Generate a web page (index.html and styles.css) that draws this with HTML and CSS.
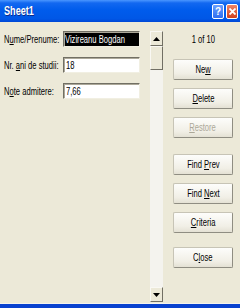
FILE: index.html
```html
<!DOCTYPE html>
<html lang="ro">
<head>
  <meta charset="UTF-8">
  <title>Sheet1</title>
  <link rel="stylesheet" href="styles.css">
</head>
<body>

  <div class="window">
    <div class="titlebar">
      <span class="title"><span class="nar">Sheet1</span></span>
      <span class="tb-btn help">?</span>
      <span class="tb-btn close">
        <svg width="7" height="7" viewBox="0 0 7 7"><path d="M0.5 0.5 L6.5 6.5 M6.5 0.5 L0.5 6.5" stroke="#fff" stroke-width="1.8"/></svg>
      </span>
    </div>

    <div class="client">
      <div class="fields">
        <div class="row">
          <label><span class="nar">N<u>u</u>me/Prenume:</span></label>
          <div class="field"><span class="nar selected">Vizireanu Bogdan</span></div>
        </div>
        <div class="row">
          <label><span class="nar">Nr. <u>a</u>ni de studii:</span></label>
          <div class="field"><span class="nar">18</span></div>
        </div>
        <div class="row">
          <label><span class="nar">N<u>o</u>te admitere:</span></label>
          <div class="field"><span class="nar">7,66</span></div>
        </div>
      </div>

      <div class="scrollbar">
        <div class="sb-btn">
          <svg width="7" height="4" viewBox="0 0 7 4"><path d="M3.5 0 L7 4 L0 4 Z" fill="#000"/></svg>
        </div>
        <div class="sb-thumb"></div>
        <div class="sb-track"></div>
        <div class="sb-btn">
          <svg width="7" height="4" viewBox="0 0 7 4"><path d="M0 0 L7 0 L3.5 4 Z" fill="#000"/></svg>
        </div>
      </div>

      <div class="actions">
        <div class="counter"><span class="nar">1 of 10</span></div>
        <button><span class="nar">Ne<u>w</u></span></button>
        <button><span class="nar"><u>D</u>elete</span></button>
        <button class="disabled"><span class="nar"><u>R</u>estore</span></button>
        <button class="spaced"><span class="nar">Find <u>P</u>rev</span></button>
        <button><span class="nar">Find <u>N</u>ext</span></button>
        <button><span class="nar"><u>C</u>riteria</span></button>
        <button class="close-btn"><span class="nar">C<u>l</u>ose</span></button>
      </div>
    </div>
  </div>

</body>
</html>
```

FILE: styles.css
```css
body {
  margin: 0;
  font-family: "Liberation Sans", Arial, sans-serif;
  font-size: 10px;
  color: #000;
}
/* the dialog is drawn narrow, so text is squeezed to match */
.nar {
  display: inline-block;
  white-space: nowrap;
  transform: scaleX(0.76);
  transform-origin: left center;
}
.window {
  width: 240px;
  height: 308px;
  display: flex;
  flex-direction: column;
  background-color: #ece9d8;
  box-sizing: border-box;
  border-bottom: 4px solid #0842cf;
}
.titlebar {
  height: 22px;
  display: flex;
  align-items: center;
  padding: 0 2px 0 4px;
  background: linear-gradient(#4a96ff 0, #1268f0 3px, #005cec 45%, #0057e6 85%, #0048d6 100%);
}
.title {
  flex: 1;
  color: #fff;
  font-weight: bold;
  font-size: 12px;
  text-shadow: 1px 1px 0 #0a2a8a;
}
.tb-btn {
  width: 10px;
  height: 13px;
  margin-left: 2px;
  display: flex;
  align-items: center;
  justify-content: center;
  border: 1px solid #fff;
  border-radius: 2px;
  color: #fff;
  font-weight: bold;
  font-size: 10px;
}
.help {
  background: linear-gradient(#6aa0ff, #2f6ef0);
}
.close {
  background: linear-gradient(#ee8466, #d1411e);
}
.client {
  flex: 1;
  display: flex;
  padding-top: 9px;
  border-bottom: 1px solid #f4f3ee;
}
.fields {
  width: 146px;
  padding-left: 4px;
  display: flex;
  flex-direction: column;
  gap: 10px;
}
.row {
  display: flex;
  align-items: center;
  height: 16px;
}
.row label {
  width: 59px;
  white-space: nowrap;
}
.field {
  width: 77px;
  height: 16px;
  box-sizing: border-box;
  background-color: #fff;
  border-top: 1px solid #716f64;
  border-left: 1px solid #716f64;
  border-right: 1px solid #f1efe2;
  border-bottom: 1px solid #f1efe2;
  box-shadow: inset 1px 1px 0 #aca899;
  padding: 1px 2px;
  line-height: 13px;
  white-space: nowrap;
  overflow: hidden;
}
.selected {
  background-color: #000;
  color: #fff;
  padding-right: 24px;
  margin-left: -1px;
}
.scrollbar {
  width: 13px;
  margin: 0 0 1px 0;
  display: flex;
  flex-direction: column;
  background-color: #f4f3ee;
}
.sb-btn, .sb-thumb {
  box-sizing: border-box;
  background-color: #ece9d8;
  border-top: 1px solid #f9f8f3;
  border-left: 1px solid #f9f8f3;
  border-right: 1px solid #716f64;
  border-bottom: 1px solid #716f64;
}
.sb-btn {
  height: 15px;
  display: flex;
  align-items: center;
  justify-content: center;
}
.sb-thumb {
  height: 24px;
}
.sb-track {
  flex: 1;
}
.actions {
  width: 60px;
  margin-left: 10px;
  display: flex;
  flex-direction: column;
  gap: 8px;
}
.counter {
  height: 13px;
  line-height: 13px;
  text-align: center;
  padding-top: 2px;
  margin-bottom: 5px;
}
.counter .nar, button .nar {
  transform-origin: center;
}
button {
  height: 21px;
  padding: 0;
  font-family: inherit;
  font-size: 10px;
  color: #000;
  background: linear-gradient(#fdfdfb, #f1efe6 70%, #e4e1d4);
  border: 1px solid #c7c4b6;
  border-right-color: #8f8d82;
  border-bottom-color: #8f8d82;
  border-radius: 2px;
}
button.disabled {
  color: #aca899;
}
button.spaced {
  margin-top: 8px;
}
button.close-btn {
  margin-top: 6px;
}
```
